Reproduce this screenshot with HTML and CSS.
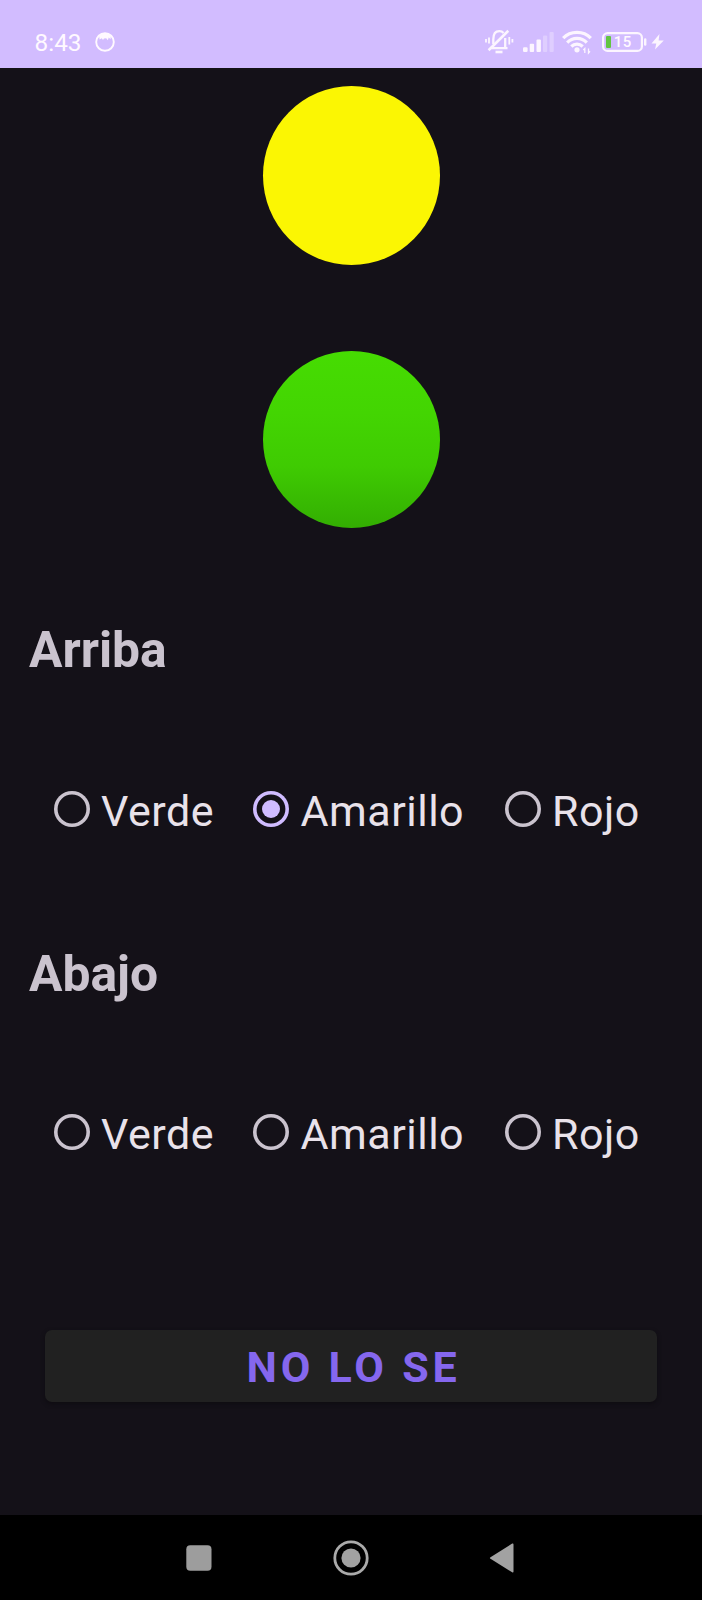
FILE: index.html
```html
<!DOCTYPE html>
<html lang="es">
<head>
<meta charset="utf-8">
<title>Semáforo</title>
<link rel="stylesheet" href="styles.css">
</head>
<body>
<div class="phone">
  <header class="status">
    <span class="clock">8:43</span>
    <svg class="face" width="20" height="20" viewBox="0 0 20 20">
      <circle cx="10" cy="10" r="8.8" fill="none" stroke="#fff9ff" stroke-width="1.9"/>
      <path d="M4 3.5Q10-1 16 3.5L15.5 7.2L13.8 5.6L12.8 8.3L11.2 6.2L9 6.4L8 8L6.8 6.3L4.6 7.5Z" fill="#fff9ff"/>
    </svg>
    <svg class="indicators" width="190" height="68" viewBox="480 0 190 68" fill="none" stroke="#fcf5ff">
      <g stroke-width="2.3">
        <path d="M491.5 48.2H507.5M493.3 44V39.5C493.3 34 495.5 31.2 499.3 31.2Q502 31.2 503.5 33M505.2 38V47.5"/>
        <path d="M488.6 50.2L508.3 30.8" stroke-width="2.6"/>
        <path d="M489 37.5V43.5M486 39V42.5M509.3 37V44.5M512.4 39V42.5" stroke-width="1.8"/>
        <path d="M495.5 52H502.5" stroke-width="2.6"/>
      </g>
      <g fill="#fcf5ff" stroke="none">
        <rect x="523" y="47.3" width="4.6" height="4.7" rx="1.2"/>
        <rect x="529.7" y="43.7" width="4.4" height="8.3" rx="1"/>
        <rect x="536.5" y="39.5" width="4.4" height="12.5" rx="1"/>
        <rect x="543" y="35.5" width="4.2" height="16.5" rx="1" opacity=".32"/>
        <rect x="549.5" y="32" width="4.2" height="20" rx="1" opacity=".32"/>
      </g>
      <path d="M563.2 38.2C570.5 30.5 583.5 30.5 590.8 38.2M567.2 42.6C572.5 37 581.5 37 586.8 42.6M571.3 46.5C574.5 43.3 579.5 43.3 582.7 46.5" stroke-width="3.2"/>
      <circle cx="577" cy="49.8" r="2.6" fill="#fcf5ff" stroke="none"/>
      <path d="M584.8 53V48.5L583.3 50M588.5 48.5V53L590 51.3" stroke-width="1.3"/>
      <rect x="603.1" y="33.1" width="38.8" height="17.8" rx="4.5" stroke-width="2.2"/>
      <rect x="606" y="36" width="5" height="12" rx="1" fill="#63c442" stroke="none"/>
      <path d="M645.2 39.5V44.5" stroke-width="2.4" stroke-linecap="round"/>
      <path d="M659.5 34L651.5 43.5H656.3L655 49.5L663.8 40.5H658.6Z" fill="#fcf5ff" stroke="none"/>
      <text class="charge" x="622.8" y="47.2" text-anchor="middle">15</text>
    </svg>
  </header>
  <main class="screen">
    <div class="lamp lamp-yellow"></div>
    <div class="lamp lamp-green"></div>
    <h2 class="title">Arriba</h2>
    <div class="options">
      <label class="option"><i class="radio"></i><span>Verde</span></label>
      <label class="option"><i class="radio checked"></i><span>Amarillo</span></label>
      <label class="option"><i class="radio"></i><span>Rojo</span></label>
    </div>
    <h2 class="title second">Abajo</h2>
    <div class="options">
      <label class="option"><i class="radio"></i><span>Verde</span></label>
      <label class="option"><i class="radio"></i><span>Amarillo</span></label>
      <label class="option"><i class="radio"></i><span>Rojo</span></label>
    </div>
    <button class="answer">NO LO SE</button>
  </main>
  <nav class="navbar">
    <svg width="26" height="26" viewBox="0 0 26 26"><rect x=".3" y=".3" width="25.2" height="25.4" rx="4" fill="#9d9d9d"/></svg>
    <svg width="36" height="36" viewBox="0 0 36 36"><circle cx="18" cy="18" r="16.2" fill="none" stroke="#aaa" stroke-width="2.8"/><circle cx="18" cy="18" r="9.6" fill="#a2a2a2"/></svg>
    <svg width="26" height="30" viewBox="0 0 26 30"><path d="M1.5 14.2L23.2 .5Q24.5 0 24.5 1.5V28.5Q24.5 30 23.2 29.3L1.5 15.8Q.2 15 1.5 14.2Z" fill="#a2a2a2"/></svg>
  </nav>
</div>
</body>
</html>
```
FILE: styles.css
```css
* {
  box-sizing: border-box;
}

body {
  margin: 0;
  background: #000;
  font-family: Roboto, sans-serif;
}

.phone {
  display: flex;
  flex-direction: column;
  width: 702px;
  height: 1600px;
  background: #141118;
}

.status {
  display: flex;
  height: 68px;
  padding-left: 34.6px;
  background: #d2bcff;
}

.clock {
  width: 59.4px;
  padding-top: 27px;
  color: #fff9ff;
  font-size: 24.3px;
  line-height: 32px;
}

.face {
  margin: 32px 0 0 1px;
}

.indicators {
  margin-left: 365px;
}

.charge {
  fill: #fff9ff;
  stroke: none;
  font-size: 15px;
  font-weight: 500;
  letter-spacing: 0.4px;
}

.screen {
  display: flex;
  flex: 1;
  flex-direction: column;
}

.lamp {
  width: 177px;
  border-radius: 50%;
  margin-left: 263px;
}

.lamp-yellow {
  height: 179px;
  margin-top: 18px;
  background: #fbf603;
}

.lamp-green {
  height: 177px;
  margin-top: 86px;
  background: linear-gradient(#46dc02 0%, #43d502 35%, #3fcb02 65%, #33ae02 100%);
}

.title {
  margin: 92px 0 0 29px;
  color: #cac3ce;
  font-size: 49.8px;
  font-weight: 700;
  line-height: 60px;
}

.title.second {
  margin-top: 103px;
}

.options {
  display: grid;
  grid-template-columns: 199.5px 251.5px 1fr;
  height: 60px;
  margin: 101px 0 0 53.5px;
}

.title.second + .options {
  margin-top: 100px;
}

.option {
  display: flex;
  gap: 11.5px;
  color: #e9e2ea;
  font-size: 43px;
  line-height: 60px;
  letter-spacing: 0.5px;
}

.radio {
  display: grid;
  place-items: center;
  width: 36px;
  height: 36px;
  margin-top: 10px;
  border-radius: 50%;
  box-shadow: inset 0 0 0 3.6px #cac3ce;
}

.radio.checked {
  box-shadow: inset 0 0 0 3.6px #d0bcff;
}

.radio.checked::before {
  content: "";
  width: 18px;
  height: 18px;
  border-radius: 50%;
  background: #d0bcff;
}

.answer {
  width: 612px;
  height: 72px;
  margin: 166px 0 0 45px;
  padding: 0 0 0 5px;
  border: 0;
  border-radius: 7px;
  background: #212121;
  box-shadow: 0 2px 4px #0e0c11;
  color: #8567ee;
  font-family: inherit;
  font-size: 43px;
  font-weight: 700;
  line-height: 75px;
  letter-spacing: 0.088em;
}

.navbar {
  display: flex;
  align-items: center;
  gap: 121px;
  height: 85px;
  padding-left: 185.5px;
  background: #000;
}

.navbar svg:last-child {
  margin-left: -0.5px;
}
```
